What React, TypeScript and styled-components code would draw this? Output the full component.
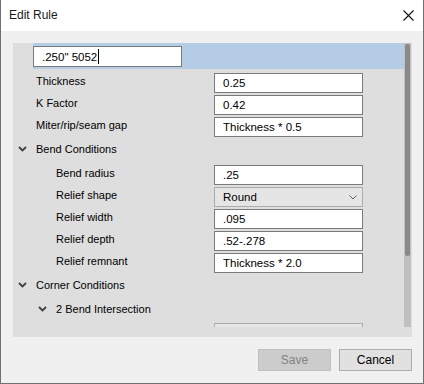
import React from 'react';
import styled, { createGlobalStyle } from 'styled-components';

const GlobalStyle = createGlobalStyle`
  html, body {
    margin: 0;
    padding: 0;
    background: #ffffff;
  }
`;

type Item =
  | { kind: 'prop'; label: string; value: string; indent: number; select?: boolean }
  | { kind: 'header'; label: string; indent: number; gapAfter?: number };

const items: Array<Item> = [
  { kind: 'prop', label: 'Thickness', value: '0.25', indent: 0 },
  { kind: 'prop', label: 'K Factor', value: '0.42', indent: 0 },
  { kind: 'prop', label: 'Miter/rip/seam gap', value: 'Thickness * 0.5', indent: 0 },
  { kind: 'header', label: 'Bend Conditions', indent: 0, gapAfter: 2 },
  { kind: 'prop', label: 'Bend radius', value: '.25', indent: 1 },
  { kind: 'prop', label: 'Relief shape', value: 'Round', indent: 1, select: true },
  { kind: 'prop', label: 'Relief width', value: '.095', indent: 1 },
  { kind: 'prop', label: 'Relief depth', value: '.52-.278', indent: 1 },
  { kind: 'prop', label: 'Relief remnant', value: 'Thickness * 2.0', indent: 1 },
  { kind: 'header', label: 'Corner Conditions', indent: 0 },
  { kind: 'header', label: '2 Bend Intersection', indent: 1 },
  { kind: 'prop', label: 'Relief shape', value: 'Round', indent: 2, select: true },
];

function Chevron() {
  return (
    <svg width="9" height="6" viewBox="0 0 9 6">
      <path d="M1 1 L4.5 4.5 L8 1" fill="none" stroke="#404040" strokeWidth="1.8" />
    </svg>
  );
}

function SmallChevron() {
  return (
    <svg width="8" height="5" viewBox="0 0 8 5">
      <path d="M0.5 0.5 L4 4 L7.5 0.5" fill="none" stroke="#606060" strokeWidth="1" />
    </svg>
  );
}

function CloseIcon() {
  return (
    <svg width="11" height="11" viewBox="0 0 11 11">
      <path d="M0.5 0.5 L10.5 10.5 M10.5 0.5 L0.5 10.5" stroke="#111" strokeWidth="1.1" />
    </svg>
  );
}

export default function App() {
  return (
    <>
      <GlobalStyle />
      <Window>
        <TitleBar>
          <Title>Edit Rule</Title>
          <CloseButton>
            <CloseIcon />
          </CloseButton>
        </TitleBar>
        <Body>
          <Panel>
            <Viewport>
              <Tree>
                <SelectedRow>
                  <NameInput>
                    .250" 5052<Caret />
                  </NameInput>
                </SelectedRow>
                <Spacer />
                {items.map((item, index) =>
                  item.kind === 'header' ? (
                    <Header key={index} $indent={item.indent} $gapAfter={item.gapAfter ?? 0}>
                      <ChevronBox>
                        <Chevron />
                      </ChevronBox>
                      {item.label}
                    </Header>
                  ) : (
                    <PropRow key={index} $indent={item.indent}>
                      <Label>{item.label}</Label>
                      {item.select ? (
                        <SelectBox>
                          <span>{item.value}</span>
                          <SmallChevron />
                        </SelectBox>
                      ) : (
                        <ValueBox>{item.value}</ValueBox>
                      )}
                    </PropRow>
                  )
                )}
              </Tree>
              <ScrollTrack>
                <ScrollThumb />
              </ScrollTrack>
            </Viewport>
          </Panel>
          <Buttons>
            <Button $disabled>Save</Button>
            <Button>Cancel</Button>
          </Buttons>
        </Body>
      </Window>
    </>
  );
}

const Window = styled.div`
  width: 424px;
  height: 384px;
  box-sizing: border-box;
  border: 1px solid #707070;
  border-top: none;
  background: #f0f0f0;
  display: flex;
  flex-direction: column;
  font-family: 'Liberation Sans', Arial, sans-serif;
  font-size: 11px;
  color: #000;
  overflow: hidden;
`;

const TitleBar = styled.div`
  height: 31px;
  flex: none;
  background: #ffffff;
  display: flex;
  align-items: center;
  justify-content: space-between;
  padding-left: 8px;
  padding-right: 9px;
`;

const Title = styled.div`
  font-size: 12px;
  color: #1a1a1a;
  padding-bottom: 1px;
`;

const CloseButton = styled.div`
  display: flex;
  line-height: 0;
  margin-top: -1px;
`;

const Body = styled.div`
  flex: 1;
  display: flex;
  flex-direction: column;
  padding: 12px 11px 0 12px;
`;

const Panel = styled.div`
  height: 294px;
  box-sizing: border-box;
  background: #dedede;
  padding: 0 1px 10px 0;
  display: flex;
`;

const Viewport = styled.div`
  flex: 1;
  display: flex;
  overflow: hidden;
`;

const Tree = styled.div`
  flex: 1;
  display: flex;
  flex-direction: column;
  overflow: hidden;
`;

const SelectedRow = styled.div`
  height: 26px;
  flex: none;
  margin-left: 20px;
  background: #b4cde4;
  display: flex;
  align-items: center;
`;

const NameInput = styled.div`
  width: 149px;
  height: 21px;
  margin-top: 1px;
  box-sizing: border-box;
  border: 1px solid #7a7a7a;
  background: #fff;
  padding-left: 8px;
  display: flex;
  align-items: center;
  font-size: 11.5px;
`;

const Caret = styled.span`
  width: 1px;
  height: 15px;
  background: #000;
  margin-left: 1px;
`;

const Spacer = styled.div`
  height: 3px;
  flex: none;
`;

const Header = styled.div<{ $indent: number; $gapAfter: number }>`
  height: 24px;
  flex: none;
  box-sizing: border-box;
  padding: 0 0 3px ${(p) => 5 + p.$indent * 20}px;
  margin-bottom: ${(p) => p.$gapAfter}px;
  display: flex;
  align-items: center;
`;

const ChevronBox = styled.span`
  width: 18px;
  display: flex;
  align-items: center;
  line-height: 0;
`;

const PropRow = styled.div<{ $indent: number }>`
  height: 22px;
  flex: none;
  display: flex;
  align-items: center;
  padding-left: ${(p) => 23 + p.$indent * 20}px;
`;

const Label = styled.div`
  flex: 1;
  padding-bottom: 5px;
`;

const ValueBox = styled.div`
  width: 149px;
  height: 20px;
  box-sizing: border-box;
  margin-right: 41px;
  border: 1px solid #7a7a7a;
  background: #fff;
  padding-left: 8px;
  display: flex;
  align-items: center;
  font-size: 11.5px;
`;

const SelectBox = styled(ValueBox)`
  border-color: #acacac;
  background: #e5e5e5;
  justify-content: space-between;
  padding-right: 5px;
`;

const ScrollTrack = styled.div`
  width: 7px;
  flex: none;
  background: #c0c0c0;
  display: flex;
  flex-direction: column;
  align-items: center;
`;

const ScrollThumb = styled.div`
  width: 5px;
  height: 212px;
  margin-top: 1px;
  border-radius: 2px;
  background: #898989;
`;

const Buttons = styled.div`
  display: flex;
  justify-content: flex-end;
  gap: 8px;
  margin-top: 12px;
`;

const Button = styled.div<{ $disabled?: boolean }>`
  width: 73px;
  height: 22px;
  box-sizing: border-box;
  border: 1px solid ${(p) => (p.$disabled ? '#bfbfbf' : '#adadad')};
  background: ${(p) => (p.$disabled ? '#cccccc' : '#e1e1e1')};
  color: ${(p) => (p.$disabled ? '#838383' : '#000')};
  display: flex;
  align-items: center;
  justify-content: center;
  font-size: 12px;
`;
